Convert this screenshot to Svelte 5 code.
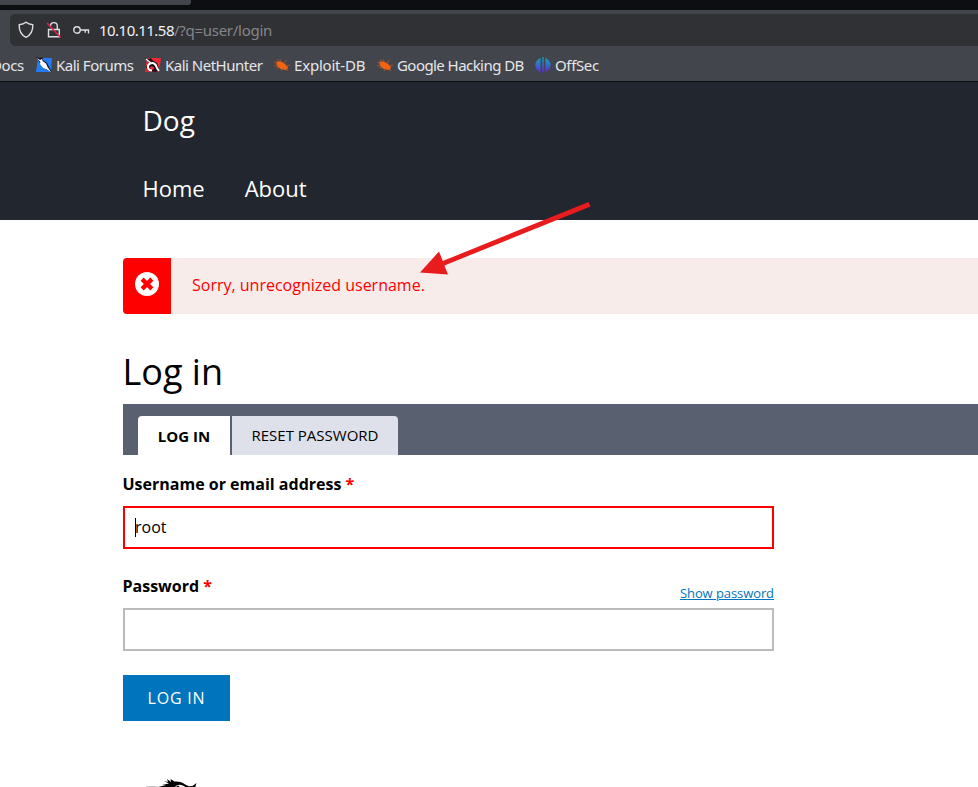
<script>
  const bookmarks = [
    { label: 'Docs', icon: '', width: 45, spacing: -0.4 },
    { label: 'Kali Forums', icon: 'forums', width: 109, spacing: -0.5 },
    { label: 'Kali NetHunter', icon: 'hunter', width: 129, spacing: -0.5 },
    { label: 'Exploit-DB', icon: 'bug', width: 103, spacing: -0.2 },
    { label: 'Google Hacking DB', icon: 'bug', width: 158, spacing: -0.56 },
    { label: 'OffSec', icon: 'offsec', width: 80, spacing: -0.35 }
  ];
  let username = $state('root');
  let password = $state('');
</script>

<div class="screen">
  <div class="tabstrip"><div class="browser-tab"></div></div>
  <div class="toolbar">
    <div class="urlbar">
      <svg class="shield" width="16" height="18" viewBox="0 0 16 18"><path d="M8 1.2C6 2.8 3.6 3.5 1.2 3.8C1 9.2 2.7 13.8 8 16.3C13.3 13.8 15 9.2 14.8 3.8C12.4 3.5 10 2.8 8 1.2Z" /></svg>
      <svg class="lock" width="16" height="18" viewBox="0 0 16 18"><path d="M4.5 5a3.4 3.4 0 0 1 6.8 0v3M2.5 8.5h10.8v7.3H2.5Z" /><path class="slash" d="M1 2L14.6 16.4" /></svg>
      <svg class="key" width="18" height="12" viewBox="0 0 18 12"><circle cx="4" cy="6" r="3.2" /><path d="M7.2 6h8.3v3.6M12.2 6v2.7" /></svg>
      <span class="url"><b>10.10.11.58</b>/?q=user/login</span>
    </div>
    <div class="bookmarks">
      {#each bookmarks as item}
        <div class="bookmark" style="width: {item.width}px; letter-spacing: {item.spacing}px">
          {#if item.icon === 'forums'}
            <svg width="16" height="16" viewBox="0 0 16 16"><path fill="#237cf5" d="M2 1h14l-1 14H0z" /><path fill="#11151d" d="M0 0l4 1 2-1 1 3 4 3 2 4 3 5-5-2-4-3-3-4z" /><path fill="#fff" d="M.5 .8L4 3l2-1 .6 2L10 6.5l1.5 3.5L15 15l-4-2.5-4-1.8L4 7l.4-2z" /></svg>
          {:else if item.icon === 'hunter'}
            <svg width="16" height="16" viewBox="0 0 16 16"><path fill="#ed2733" d="M2 1h14l-2 14H0z" /><path fill="#17141b" d="M0 1l4 1 2-1 1 2 5 3 3 8-5 1-7-1-2-4 3-5z" /><path fill="#ed2733" d="M4.5 11q2-3.5 5 0l-2 2z" /><path fill="none" stroke="#fff" stroke-width="2" d="M7 13.5C2 13.5 2 8 5 6.5c4-1.5 6 1 7 4.5l2 3" /><path stroke="#fff" stroke-width="1.2" d="M1 2l5 4" /></svg>
          {:else if item.icon === 'bug'}
            <svg width="16" height="16" viewBox="0 0 16 16"><path fill="#f26411" d="M2 5c3-2 7 0 9 2l3 3-1 3c-4 0-8-1-10-4z" /><path fill="none" stroke="#a6562d" stroke-width=".8" d="M4 6L0 5M5 5L3 2M7 5L6 2M10 7l2-4M4 8L0 9M6 10l-4 1M9 11l-2 3M12 9l4-1M12 11l2 3" /></svg>
          {:else if item.icon === 'offsec'}
            <svg width="16" height="16" viewBox="0 0 16 16"><defs><linearGradient id="bands" x2="0" y2="1"><stop stop-color="#16a4b7" /><stop offset=".5" stop-color="#336cc9" /><stop offset="1" stop-color="#6a20df" /></linearGradient></defs><path fill="url(#bands)" d="M5.6 1v14C-1.5 12-1.5 4 5.6 1ZM7.3 0h1.4v16H7.3ZM10.4 1c7 3 7 11 0 14Z" /></svg>
          {/if}
          <span>{item.label}</span>
        </div>
      {/each}
    </div>
  </div>

  <header>
    <div class="site">Dog</div>
    <nav><span>Home</span><span>About</span></nav>
  </header>

  <main>
    <div class="message">
      <div class="message-icon">
        <svg width="24" height="24" viewBox="0 0 24 24"><circle cx="12" cy="12" r="12" fill="#fff" /><path d="M8.7 8.7l6.6 6.6M15.3 8.7l-6.6 6.6" stroke="#f00" stroke-width="4.4" stroke-linecap="square" /></svg>
      </div>
      <p>Sorry, unrecognized username.</p>
    </div>
    <h1>Log in</h1>
    <div class="tabs"><span class="active">LOG IN</span><span class="reset">RESET PASSWORD</span></div>
    <form onsubmit={(e) => e.preventDefault()}>
      <label for="user">Username or email address <i>*</i></label>
      <div class="user-field"><input id="user" class="error" bind:value={username} /><div class="caret"></div></div>
      <div class="password-label"><label for="pass">Password <i>*</i></label><a href="#pass">Show password</a></div>
      <input id="pass" type="password" bind:value={password} />
      <button>LOG IN</button>
    </form>
    <svg class="dragon" width="60" height="9" viewBox="0 0 60 9"><path fill="#bbb" d="M1 7.5l7-.5 8 1-7 1H1z" /><path d="M12 8.5l5-1.5h4l-4-1 7-1.5L19 2l4 1-1-3 4 3-.5-3 4 2.5c7-.8 10 3 15 4.8l3-.3 4-3-1 3v2H41c-2-3-8-5-11-1l-1 1z" /><path d="M31 8l2-1.5L36 9z" /></svg>
  </main>

  <svg class="arrow" width="172" height="76" viewBox="0 0 172 76"><path fill="#e81c1c" d="M0 72.5L19 51.5L22.8 61L168.5 2L170.5 6.5L24.4 65.5L28 74.5Z" /></svg>
</div>

<style>
  .screen { position: relative; width: 978px; height: 787px; overflow: hidden; background: #fff; font-family: "Open Sans", sans-serif; color: #000; }
  .screen * { box-sizing: border-box; }
  svg { flex: none; display: block; }
  .tabstrip { height: 10px; background: #0d0e12; }
  .browser-tab { width: 191px; height: 5px; background: #42454c; border-bottom-right-radius: 3px; }
  .toolbar { height: 72px; padding: 4px 0 0; background: #42454c; border-bottom: 1px solid #0d0e12; }
  .urlbar { display: flex; align-items: center; height: 32px; margin-left: 10px; padding-left: 8px; background: #303135; border-radius: 5px 0 0 5px; }
  .urlbar svg { fill: none; stroke: #dedee1; stroke-width: 1.4; }
  .lock { margin-left: 12px; }
  .urlbar .slash { stroke: #e32350; }
  .key { margin-left: 11px; }
  .url { margin-left: 8px; color: #85868a; font: 15px/20px "Noto Sans", sans-serif; letter-spacing: -.28px; white-space: nowrap; }
  .url b { color: #f2f2f4; font-weight: 400; letter-spacing: -.52px; }
  .bookmarks { display: flex; height: 35px; margin-left: -9px; padding-top: 3px; }
  .bookmark { flex: none; display: flex; align-items: center; gap: 4px; color: #e6e6e8; font: 15px "Noto Sans", sans-serif; white-space: nowrap; }
  header { height: 138px; padding: 18px 0 0 142.5px; background: #22262f; color: #fff; }
  .site { font-size: 28px; line-height: 40px; }
  nav { display: flex; gap: 40px; margin-top: 31px; font-size: 22px; line-height: 34px; }
  main { padding: 38px 0 0 123px; }
  .message { display: flex; height: 56px; background: #f8eceb; border-radius: 4px 0 0 4px; overflow: hidden; }
  .message-icon { width: 48px; padding: 14px 12px; background: #f00; }
  p { margin: 0; padding: 15px 21px; color: #f00; font-size: 16px; line-height: 24px; }
  h1 { margin: 30px 0 0 -.5px; height: 60px; font-size: 36px; line-height: 56px; font-weight: 400; }
  .tabs { display: flex; gap: 2px; height: 51px; padding: 12px 0 0 15px; background: #596170; font-size: 15px; line-height: 38px; }
  .tabs span { height: 39px; text-align: center; }
  .active { width: 92px; background: #fff; font-weight: 700; border-radius: 4px 0 0 0; padding-top: 1px; }
  .reset { width: 166px; background: #dee1ea; border-radius: 0 4px 0 0; }
  form { width: 651px; padding-top: 17px; }
  label { display: block; height: 34px; margin-left: -.5px; font-size: 16px; line-height: 24px; font-weight: 700; }
  i { color: #f00; font-style: normal; }
  input { display: block; width: 651px; height: 43px; border: 2px solid #bbb; padding: 0 10px 1px; outline: 0; background: #fff; font: 16px "Open Sans", sans-serif; color: #000; border-radius: 0; }
  .error { border-color: #f00; }
  .user-field { position: relative; }
  .caret { position: absolute; left: 12px; top: 12px; width: 1px; height: 19px; background: #000; }
  .password-label { display: flex; justify-content: space-between; height: 59px; padding-top: 25px; }
  a { padding-top: 9px; color: #0074bd; font-size: 13px; line-height: 20px; letter-spacing: -.08px; text-decoration: underline; }
  button { display: block; margin-top: 24px; width: 107px; height: 46px; padding: 0; border: 0; background: #0074bd; color: #fff; font: 16px "Open Sans", sans-serif; letter-spacing: .8px; }
  .dragon { margin: 58px 0 0 22px; }
  .arrow { position: absolute; left: 420px; top: 200px; }
</style>
